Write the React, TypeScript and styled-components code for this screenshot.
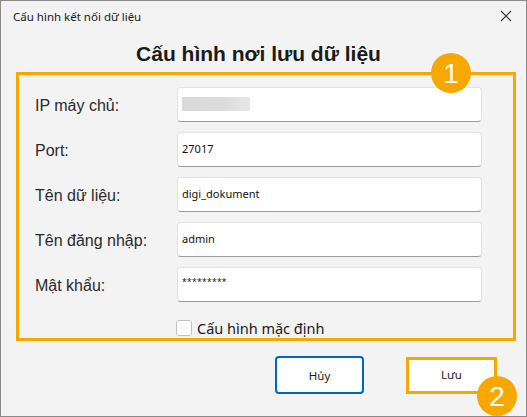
import React from "react";
import styled, { createGlobalStyle } from "styled-components";

const GlobalStyle = createGlobalStyle`
    html, body {
        margin: 0;
        padding: 0;
        background: #f3f3f3;
    }
    * {
        box-sizing: border-box;
    }
`;

const fields = [
    { label: "IP máy chủ:", value: "", blurred: true },
    { label: "Port:", value: "27017" },
    { label: "Tên dữ liệu:", value: "digi_dokument" },
    { label: "Tên đăng nhập:", value: "admin" },
    { label: "Mật khẩu:", value: "*********", secret: true },
];

export default function App() {
    return (
        <>
            <GlobalStyle />
            <Window>
                <TitleBar>
                    <TitleText>Cấu hình kết nối dữ liệu</TitleText>
                    <CloseButton aria-label="close">
                        <svg width="12" height="12" viewBox="0 0 12 12">
                            <path d="M1 1L11 11M11 1L1 11" stroke="#333" strokeWidth="1.1" />
                        </svg>
                    </CloseButton>
                </TitleBar>
                <Heading>Cấu hình nơi lưu dữ liệu</Heading>
                <FormBox>
                    <Badge $left={412} $top={-22}>1</Badge>
                    <FormGrid>
                        {fields.map((f) => (
                            <React.Fragment key={f.label}>
                                <Label>{f.label}</Label>
                                <Input $secret={f.secret}>
                                    {f.blurred ? <Blur /> : f.value}
                                </Input>
                            </React.Fragment>
                        ))}
                    </FormGrid>
                    <CheckRow>
                        <CheckBox />
                        <CheckLabel>Cấu hình mặc định</CheckLabel>
                    </CheckRow>
                </FormBox>
                <ButtonRow>
                    <CancelButton>Hủy</CancelButton>
                    <SaveButton>
                        Lưu
                        <Badge $left={68} $top={16}>2</Badge>
                    </SaveButton>
                </ButtonRow>
            </Window>
        </>
    );
}

const Window = styled.div`
    width: 527px;
    height: 417px;
    border: 1px solid #8a8a8a;
    background: #f3f3f3;
    display: flex;
    flex-direction: column;
    overflow: hidden;
`;

const TitleBar = styled.div`
    height: 30px;
    display: flex;
    align-items: center;
    justify-content: space-between;
    padding: 0 14px 0 12px;
`;

const TitleText = styled.div`
    font-family: "Noto Sans", "Open Sans", sans-serif;
    font-size: 11.5px;
    color: #1a1a1a;
`;

const CloseButton = styled.div`
    display: flex;
    align-items: center;
`;

const Heading = styled.h1`
    margin: 11px 0 0;
    height: 30px;
    text-align: center;
    font-family: "Liberation Sans", Arial, sans-serif;
    font-weight: bold;
    font-size: 21px;
    color: #1a1a1a;
    padding-right: 10px;
`;

const FormBox = styled.div`
    position: relative;
    margin-left: 15px;
    width: 500px;
    height: 269px;
    border: 3px solid #f7a800;
    padding: 12px 30px 0 16px;
`;

const FormGrid = styled.div`
    display: grid;
    grid-template-columns: 142px 305px;
    grid-auto-rows: 35px;
    row-gap: 10px;
    align-items: center;
`;

const Label = styled.div`
    font-family: "Liberation Sans", Arial, sans-serif;
    font-size: 16px;
    color: #2a2a2a;
    padding-top: 2px;
`;

const Input = styled.div<{ $secret?: boolean }>`
    height: 35px;
    background: #fff;
    border: 1px solid #e3e3e3;
    border-bottom: 1px solid #9a9a9a;
    border-radius: 4px;
    display: flex;
    align-items: center;
    padding: 0 0 ${(p) => (p.$secret ? "6px" : "2px")} 4px;
    font-family: "Noto Sans", "Open Sans", sans-serif;
    font-size: ${(p) => (p.$secret ? "8.5px" : "11px")};
    letter-spacing: ${(p) => (p.$secret ? "0.3px" : "0")};
    color: #111;
`;

const Blur = styled.div`
    width: 68px;
    height: 14px;
    background: linear-gradient(90deg, #d9d9d9, #dcdcdc 60%, #e6e6e6);
`;

const CheckRow = styled.div`
    display: flex;
    align-items: center;
    gap: 5px;
    margin: 17px 0 0 141px;
`;

const CheckBox = styled.div`
    width: 16px;
    height: 16px;
    border: 1px solid #c4c4c4;
    border-radius: 3px;
    background: #fff;
`;

const CheckLabel = styled.span`
    font-family: "Noto Sans", "Open Sans", sans-serif;
    font-size: 14.5px;
    color: #1a1a1a;
    line-height: 18px;
`;

const ButtonRow = styled.div`
    display: flex;
    gap: 42px;
    padding: 15px 0 0 274px;
`;

const CancelButton = styled.div`
    width: 89px;
    height: 38px;
    border: 2px solid #0067c0;
    border-radius: 4px;
    background: #fff;
    display: flex;
    align-items: center;
    justify-content: center;
    font-family: "Noto Sans", "Open Sans", sans-serif;
    font-size: 11.5px;
    color: #1a1a1a;
`;

const SaveButton = styled.div`
    position: relative;
    width: 91px;
    height: 37px;
    margin-top: 1px;
    border: 3px solid #f7a800;
    background: #fff;
    display: flex;
    align-items: center;
    justify-content: center;
    font-family: "Noto Sans", "Open Sans", sans-serif;
    font-size: 11.5px;
    color: #1a1a1a;
    padding-bottom: 2px;
`;

const Badge = styled.div<{ $left: number; $top: number }>`
    position: absolute;
    left: ${(p) => p.$left}px;
    top: ${(p) => p.$top}px;
    width: 40px;
    height: 40px;
    border-radius: 50%;
    background: #f7a800;
    color: #fff;
    display: flex;
    align-items: center;
    justify-content: center;
    font-family: "Liberation Sans", Arial, sans-serif;
    font-size: 28px;
    line-height: 1;
    padding-top: 1px;
`;
